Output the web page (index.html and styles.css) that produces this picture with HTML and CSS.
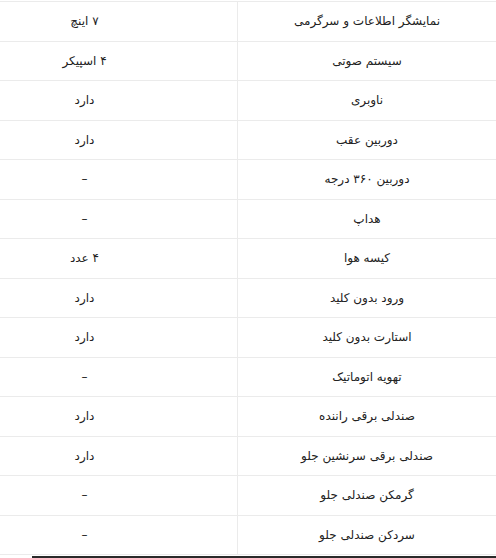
FILE: index.html
```html
<!DOCTYPE html>
<html lang="fa" dir="rtl">
<head>
<meta charset="utf-8">
<link rel="stylesheet" href="styles.css">
</head>
<body>
<div class="wrap">
<table class="specs">
<tbody>
<tr><td class="k">نمایشگر اطلاعات و سرگرمی</td><td class="v">۷ اینچ</td></tr>
<tr><td class="k">سیستم صوتی</td><td class="v">۴ اسپیکر</td></tr>
<tr><td class="k">ناوبری</td><td class="v">دارد</td></tr>
<tr><td class="k">دوربین عقب</td><td class="v">دارد</td></tr>
<tr><td class="k">دوربین ۳۶۰ درجه</td><td class="v">–</td></tr>
<tr><td class="k">هداپ</td><td class="v">–</td></tr>
<tr><td class="k">کیسه هوا</td><td class="v">۴ عدد</td></tr>
<tr><td class="k">ورود بدون کلید</td><td class="v">دارد</td></tr>
<tr><td class="k">استارت بدون کلید</td><td class="v">دارد</td></tr>
<tr><td class="k">تهویه اتوماتیک</td><td class="v">–</td></tr>
<tr><td class="k">صندلی برقی راننده</td><td class="v">دارد</td></tr>
<tr><td class="k">صندلی برقی سرنشین جلو</td><td class="v">دارد</td></tr>
<tr><td class="k">گرمکن صندلی جلو</td><td class="v">–</td></tr>
<tr><td class="k">سردکن صندلی جلو</td><td class="v">–</td></tr>
</tbody>
</table>
</div>
<div class="scrollbar"></div>
</body>
</html>
```
FILE: styles.css
```css
html, body {
  margin: 0;
  padding: 0;
  background: #fff;
  overflow: hidden;
  height: 558px;
}
body {
  font-family: "DejaVu Sans", "Noto Sans", sans-serif;
  color: #222;
  position: relative;
}
.wrap {
  padding-top: 1px;
  width: 496px;
}
.specs {
  width: 100%;
  border-collapse: collapse;
  table-layout: fixed;
}
.specs td {
  height: 38.5px;
  padding: 0;
  border-top: 1px solid #ebebeb;
  border-bottom: 1px solid #ebebeb;
  text-align: center;
  font-size: 12px;
  vertical-align: middle;
}
.specs td.k {
  width: 258px;
  border-left: 1px solid #ebebeb;
}
.specs td.v {
  padding-right: 68px;
}
.scrollbar {
  position: absolute;
  left: 32px;
  right: 0;
  bottom: 0;
  height: 2px;
  background: #2a2a2a;
}
```
